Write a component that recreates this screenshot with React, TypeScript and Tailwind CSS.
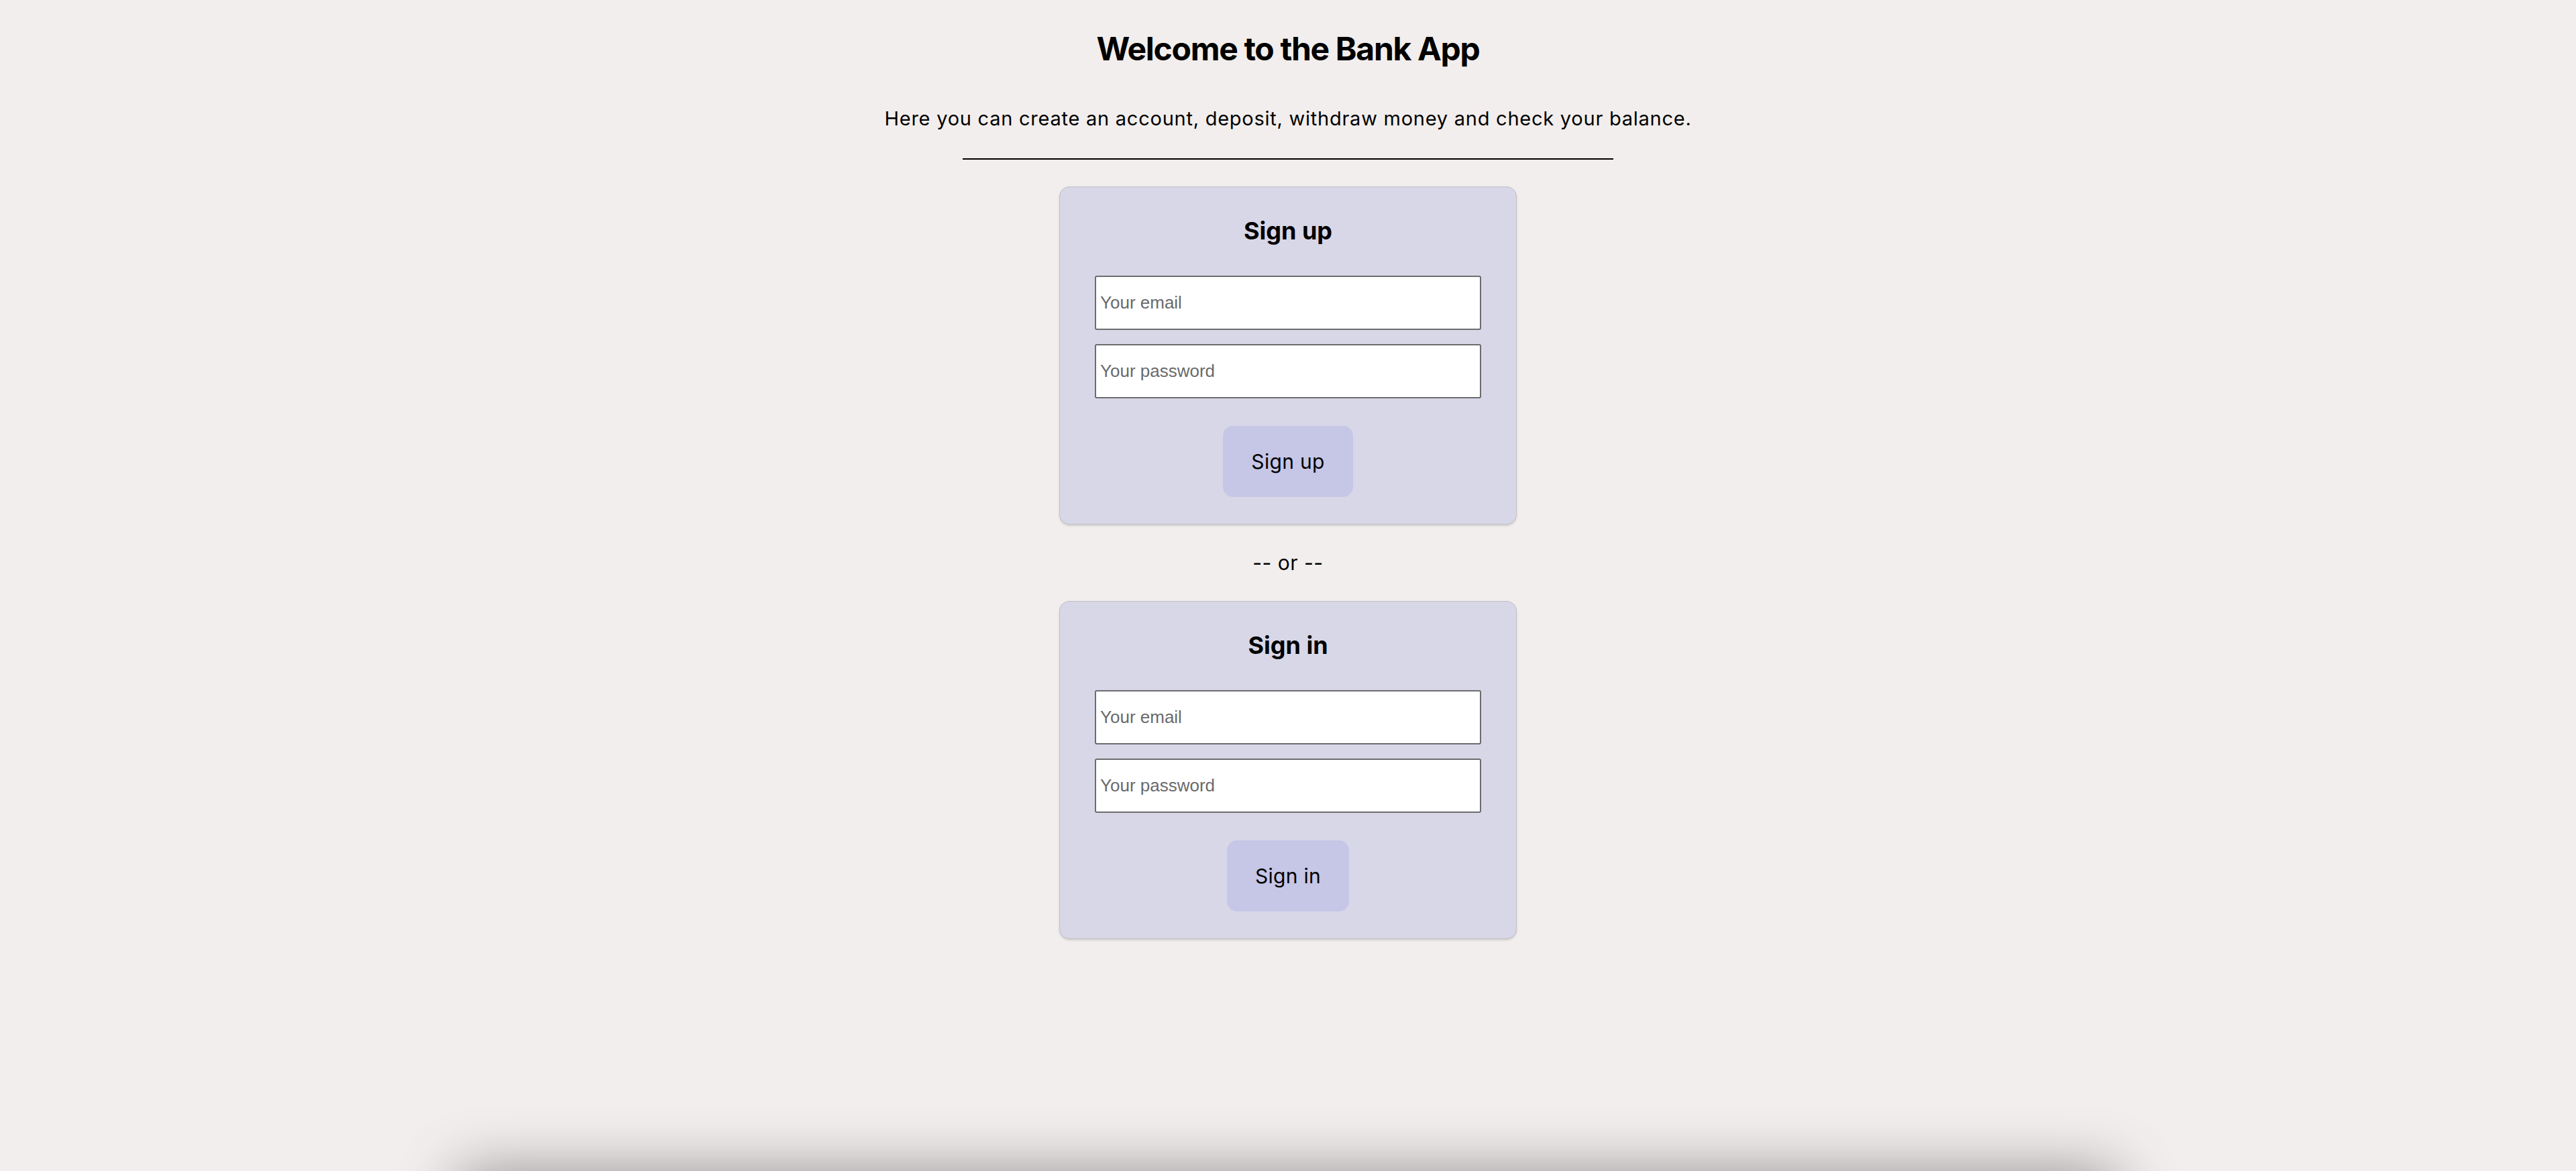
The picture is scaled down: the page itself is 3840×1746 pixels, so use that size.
import React from "react";

function AuthCard({ title, button }: { title: string; button: string }) {
  return (
    <div className="w-[682px] h-[504px] bg-[#d8d7e8] border-[1.5px] border-[#c3c2c8] rounded-[15px] shadow-[0_2px_3px_rgba(0,0,0,0.14)] px-[52px] pt-[43px] flex flex-col items-center">
      <h2 className="text-[36px] leading-[44px] font-bold text-black">{title}</h2>
      <div className="mt-[45px] w-full flex flex-col gap-[21px]">
        <input
          type="email"
          placeholder="Your email"
          className="w-full h-[81px] bg-white border-2 border-[#6c6c70] rounded-[3px] pl-[6px] text-[26px] text-black placeholder:text-[#6a6a6a] outline-none"
          style={{ fontFamily: '"Liberation Sans", Arial, sans-serif' }}
        />
        <input
          type="password"
          placeholder="Your password"
          className="w-full h-[81px] bg-white border-2 border-[#6c6c70] rounded-[3px] pl-[6px] text-[26px] text-black placeholder:text-[#6a6a6a] outline-none"
          style={{ fontFamily: '"Liberation Sans", Arial, sans-serif' }}
        />
      </div>
      <button className="mt-[41px] h-[106px] px-[42px] bg-[#c6c6e7] rounded-[15px] text-[30px] tracking-[0.3px] text-black font-normal">
        {button}
      </button>
    </div>
  );
}

export default function App() {
  return (
    <div
      className="min-h-screen bg-[#f2eeed] flex flex-col items-center pt-[44px] text-black overflow-hidden"
      style={{ fontFamily: 'Inter, "Noto Sans", sans-serif' }}
    >
      <h1 className="text-[48px] leading-[58px] font-bold tracking-[-1.3px]">Welcome to the Bank App</h1>
      <p className="mt-[58px] text-[29px] leading-[34px] tracking-[0.75px]">
        Here you can create an account, deposit, withdraw money and check your balance.
      </p>
      <div className="mt-[42px] w-[970px] h-[2px] bg-black" />
      <div className="mt-[40px]">
        <AuthCard title="Sign up" button="Sign up" />
      </div>
      <div className="h-[114px] flex items-center justify-center text-[30px] leading-[34px] tracking-[0.5px]">-- or --</div>
      <AuthCard title="Sign in" button="Sign in" />
      <div className="mt-[349px] w-[2470px] h-[200px] bg-[#f2eeed] shadow-[0_0_90px_rgba(0,0,0,0.42)] shrink-0" />
    </div>
  );
}
